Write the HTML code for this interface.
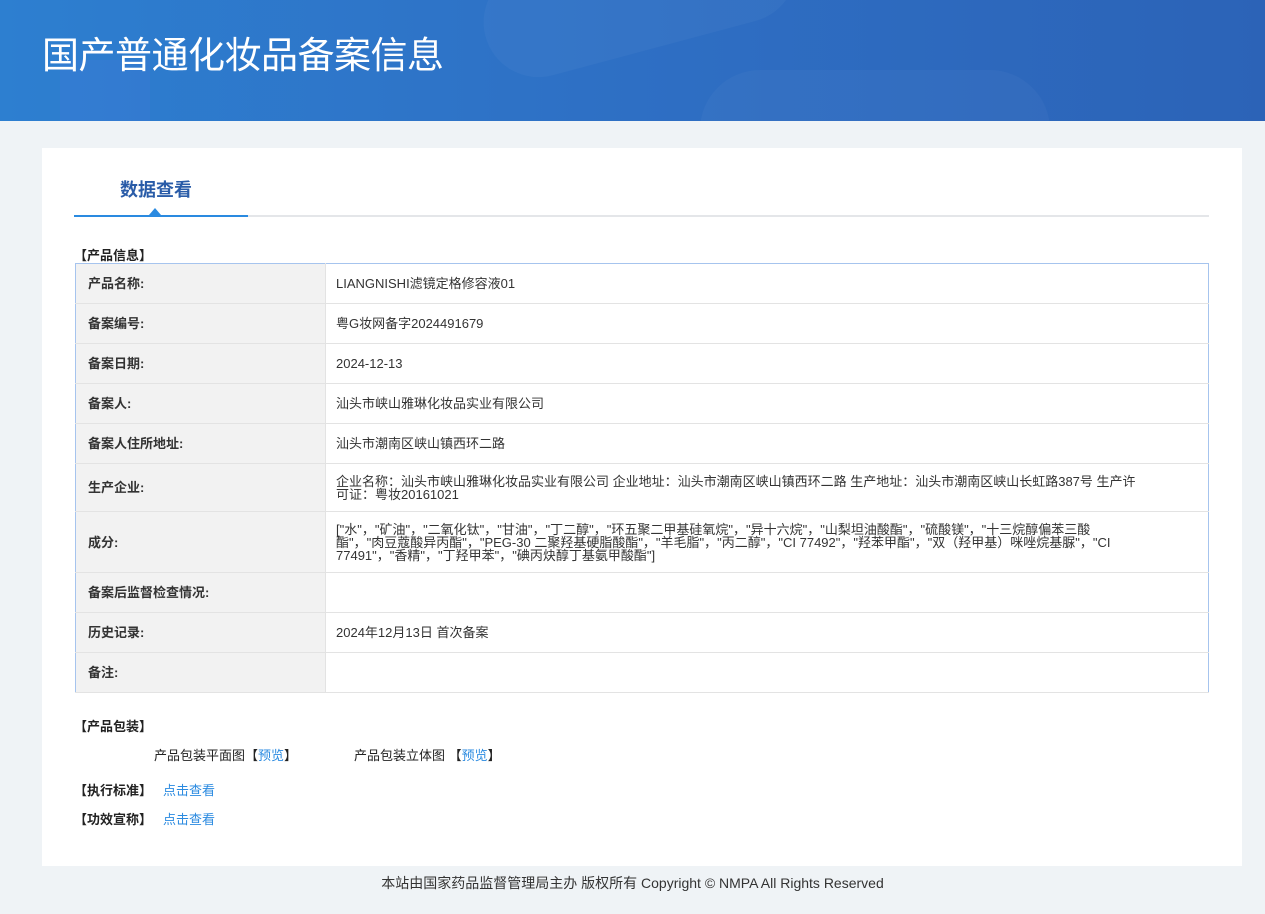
<!DOCTYPE html>
<html><head><meta charset="utf-8"><style>
*{margin:0;padding:0;box-sizing:border-box}
body{width:1265px;height:914px;background:#eff3f6;font-family:"Liberation Sans","Noto Sans CJK SC",sans-serif;color:#333;position:relative;overflow:hidden}
.hd{position:absolute;left:0;top:0;width:1265px;height:121px;background:linear-gradient(90deg,#2d7fd0 0%,#2e6fc4 50%,#2c63b7 100%);overflow:hidden}
.hd .c1{position:absolute;left:480px;top:-60px;width:320px;height:110px;border-radius:60px;background:rgba(255,255,255,.035);transform:rotate(-15deg)}
.hd .c2{position:absolute;left:60px;top:60px;width:90px;height:70px;background:rgba(90,120,230,.15)}
.hd .c3{position:absolute;left:700px;top:70px;width:350px;height:120px;border-radius:60px;background:rgba(255,255,255,.03)}
.hd h1{position:absolute;left:42px;top:25px;font-size:37px;font-weight:normal;color:#fff;letter-spacing:-0.5px}
.card{position:absolute;left:42px;top:148px;width:1200px;height:718px;background:#fff}
.tab{position:absolute;left:78px;top:28px;font-size:18px;font-weight:bold;color:#2a5ca8}
.line{position:absolute;left:32px;top:67px;width:1135px;height:2px;background:#e4e6e9}
.line b{position:absolute;left:0;top:0;width:174px;height:2px;background:#2a8ae0}
.tri{position:absolute;left:107px;top:60px;width:0;height:0;border-left:6px solid transparent;border-right:6px solid transparent;border-bottom:7px solid #2a8ae0}
.sec{position:absolute;left:32px;font-size:13px;font-weight:bold;color:#222}
table{position:absolute;left:33px;top:115px;width:1134px;border-collapse:collapse;border:1px solid #a6c4ee;font-size:13px}
td{border-bottom:1px solid #e3e3e3;vertical-align:middle;line-height:13px}
td.l{width:250px;background:#f2f2f2;font-weight:bold;padding-left:12px;color:#333;border-right:1px solid #e3e3e3}
td.v{padding:0 70px 0 10px;color:#333}
a{color:#2a8ae0;text-decoration:none}
.t{position:absolute;font-size:13px;color:#222}
.ft{position:absolute;left:0;top:873px;width:1265px;text-align:center;font-size:14px;color:#333}
</style></head><body>
<div class="hd"><div class="c1"></div><div class="c2"></div><div class="c3"></div><h1>国产普通化妆品备案信息</h1></div>
<div class="card">
<div class="tab">数据查看</div>
<div class="tri"></div>
<div class="line"><b></b></div>
<div class="sec" style="top:97px">【产品信息】</div>
<table>
<tr style="height:40px"><td class="l">产品名称:</td><td class="v">LIANGNISHI滤镜定格修容液01</td></tr>
<tr style="height:40px"><td class="l">备案编号:</td><td class="v">粤G妆网备字2024491679</td></tr>
<tr style="height:40px"><td class="l">备案日期:</td><td class="v">2024-12-13</td></tr>
<tr style="height:40px"><td class="l">备案人:</td><td class="v">汕头市峡山雅琳化妆品实业有限公司</td></tr>
<tr style="height:40px"><td class="l">备案人住所地址:</td><td class="v">汕头市潮南区峡山镇西环二路</td></tr>
<tr style="height:48px"><td class="l">生产企业:</td><td class="v">企业名称：汕头市峡山雅琳化妆品实业有限公司 企业地址：汕头市潮南区峡山镇西环二路 生产地址：汕头市潮南区峡山长虹路387号 生产许可证：粤妆20161021</td></tr>
<tr style="height:61px"><td class="l">成分:</td><td class="v">["水"，"矿油"，"二氧化钛"，"甘油"，"丁二醇"，"环五聚二甲基硅氧烷"，"异十六烷"，"山梨坦油酸酯"，"硫酸镁"，"十三烷醇偏苯三酸酯"，"肉豆蔻酸异丙酯"，"PEG-30 二聚羟基硬脂酸酯"，"羊毛脂"，"丙二醇"，"CI 77492"，"羟苯甲酯"，"双（羟甲基）咪唑烷基脲"，"CI 77491"，"香精"，"丁羟甲苯"，"碘丙炔醇丁基氨甲酸酯"]</td></tr>
<tr style="height:40px"><td class="l">备案后监督检查情况:</td><td class="v"></td></tr>
<tr style="height:40px"><td class="l">历史记录:</td><td class="v">2024年12月13日 首次备案</td></tr>
<tr style="height:40px"><td class="l">备注:</td><td class="v"></td></tr>
</table>
<div class="sec" style="top:568px">【产品包装】</div>
<div class="t" style="left:112px;top:597px">产品包装平面图【<a>预览</a>】</div>
<div class="t" style="left:312px;top:597px">产品包装立体图 【<a>预览</a>】</div>
<div class="sec" style="top:632px">【执行标准】</div><a class="t" style="left:121px;top:632px;color:#2a8ae0">点击查看</a>
<div class="sec" style="top:661px">【功效宣称】</div><a class="t" style="left:121px;top:661px;color:#2a8ae0">点击查看</a>
</div>
<div class="ft">本站由国家药品监督管理局主办 版权所有 Copyright © NMPA All Rights Reserved</div>
</body></html>
